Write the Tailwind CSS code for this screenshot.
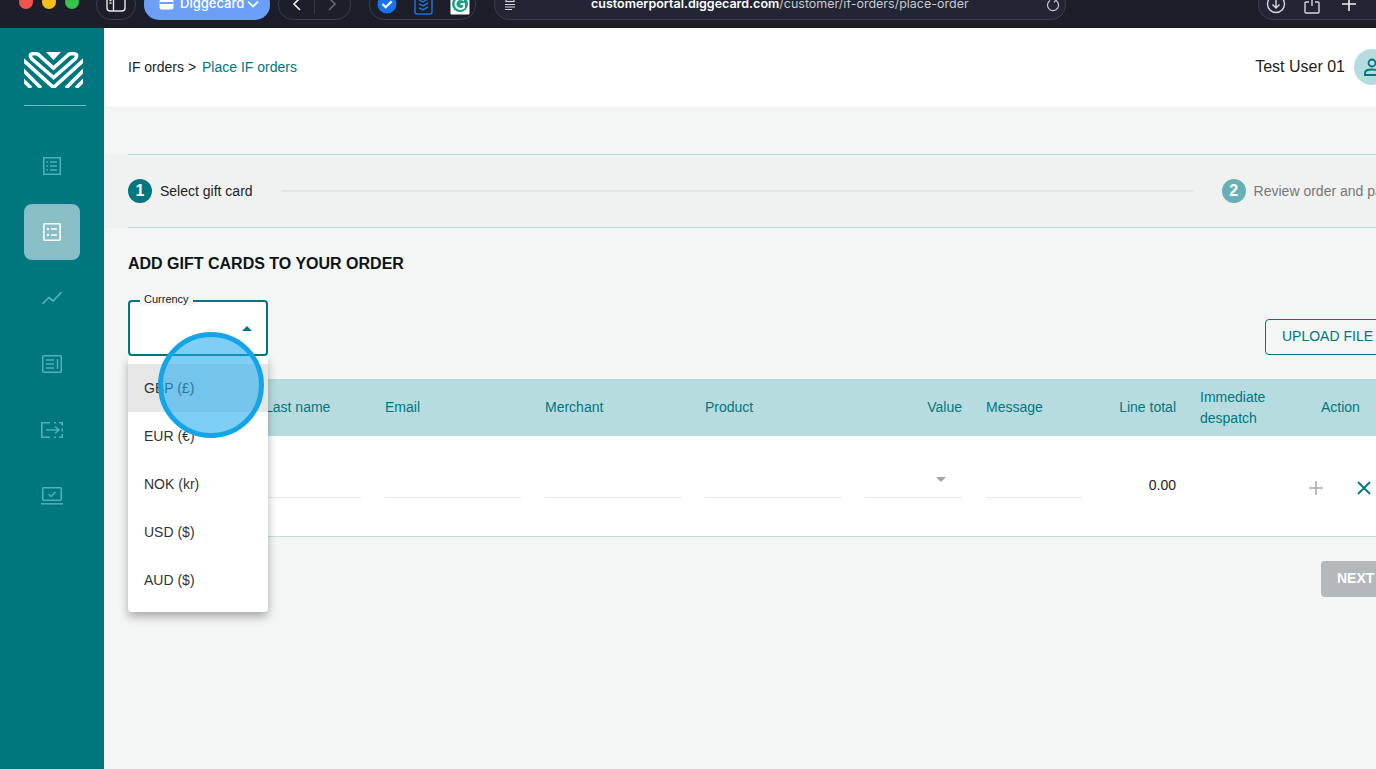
<!DOCTYPE html>
<html lang="en">
<head>
  <meta charset="UTF-8" />
  <title>Place IF orders</title>
  <script src="https://cdn.jsdelivr.net/npm/@tailwindcss/browser@4"></script>
</head>
<body class="w-[1376px] h-[769px] overflow-hidden bg-[#f4f6f6] font-['Liberation_Sans',Arial,sans-serif]">

  <!-- browser toolbar, cut off at the top of the capture -->
  <div class="h-[28px] overflow-hidden bg-[#1c1e29]">
    <div class="flex items-end h-[20px] pl-[19px] w-[1500px] font-['Inter',sans-serif]">
      <div class="flex gap-[9px] self-start -mt-[5px]">
        <span class="w-[14px] h-[14px] rounded-full bg-[#f0544f]"></span>
        <span class="w-[14px] h-[14px] rounded-full bg-[#f8bd1c]"></span>
        <span class="w-[14px] h-[14px] rounded-full bg-[#36c24b]"></span>
      </div>
      <div class="ml-[17px] w-[40px] h-[32px] shrink-0 rounded-[15px] border border-[#3a3d4a] flex items-center justify-center">
        <svg width="20" height="16" viewBox="0 0 20 16" fill="none" stroke="#e8e8ea" stroke-width="1.4"><rect x="1" y="1" width="18" height="14" rx="3"/><path d="M7.500 1v14"/><path d="M3.500 4.500h2M3.500 7h2" /></svg>
      </div>
      <div class="ml-[8px] w-[126px] h-[32px] shrink-0 rounded-[15px] bg-[#6c9ff6] flex items-center pl-[15px] text-white text-[13px] font-medium">
        <svg width="15" height="11" viewBox="0 0 15 11" class="mr-[6px]"><rect x="0.500" y="0.500" width="14" height="10" rx="2" fill="#fff"/><rect x="0.500" y="3" width="14" height="2" fill="#6c9ff6"/></svg>
        <span>Diggecard</span>
        <svg width="12" height="8" viewBox="0 0 12 8" fill="none" stroke="#fff" stroke-width="1.6" class="ml-[3px]"><path d="M1 1.500l5 5 5-5"/></svg>
      </div>
      <div class="ml-[8px] w-[73px] h-[32px] shrink-0 rounded-[15px] border border-[#3a3d4a] flex items-center">
        <div class="w-[36px] flex justify-center"><svg width="10" height="14" viewBox="0 0 10 14" fill="none" stroke="#e8e8ea" stroke-width="1.7"><path d="M8 1L2 7l6 6"/></svg></div>
        <div class="w-px h-[20px] bg-[#3a3d4a]"></div>
        <div class="w-[36px] flex justify-center"><svg width="10" height="14" viewBox="0 0 10 14" fill="none" stroke="#62646e" stroke-width="1.7"><path d="M2 1l6 6-6 6"/></svg></div>
      </div>
      <div class="ml-[18px] w-[107px] h-[32px] shrink-0 rounded-[15px] border border-[#3a3d4a] flex items-center pl-[7px] gap-[17px]">
        <svg width="20" height="20" viewBox="0 0 20 20"><circle cx="10" cy="10" r="9.500" fill="#1a73e8"/><path d="M5.500 10l3.200 3.200 6-6" fill="none" stroke="#fff" stroke-width="2.200"/></svg>
        <svg width="19" height="22" viewBox="0 0 19 22" fill="none" stroke="#1f6fd6" stroke-width="1.500"><rect x="1" y="1" width="17" height="20" rx="2"/><path d="M5 7l4 2 5-3M5 11l4 2 5-3M5 15l4 2 5-3"/></svg>
        <svg width="20" height="22" viewBox="0 0 20 22"><rect x="0.500" y="0.500" width="19" height="21" rx="1" fill="#fff"/><circle cx="10" cy="11" r="8" fill="#15a37f"/><path d="M14 7.500a5 5 0 1 0 0 7V11h-3.500" fill="none" stroke="#fff" stroke-width="2"/></svg>
      </div>
      <div class="ml-[18px] w-[572px] h-[32px] shrink-0 rounded-[15px] border border-[#3a3d4a] bg-[#222634] flex items-center relative">
        <svg width="12" height="14" viewBox="0 0 12 14" fill="none" stroke="#d8d8dc" stroke-width="1.200" class="ml-[9px]"><rect x="2" y="0.500" width="8" height="4"/><path d="M1 7.500h10M1 10h10M1 12.500h7"/></svg>
        <div class="ml-[75px] text-[12.500px] whitespace-nowrap"><span class="font-semibold text-white">customerportal.diggecard.com</span><span class="text-[#c8c9ce]">/customer/if-orders/place-order</span></div>
        <svg width="14" height="14" viewBox="0 0 14 14" fill="none" stroke="#c8c9ce" stroke-width="1.200" class="absolute left-[551px] top-[9px]"><path d="M9.500 2.200A5.500 5.500 0 1 1 4 2.500"/><path d="M7.500 0.500l2.200 1.700-1.700 2.200"/></svg>
      </div>
      <div class="ml-[192px] w-[132px] h-[32px] shrink-0 rounded-[15px] border border-[#3a3d4a] bg-[#222634] flex items-center pl-[7px] gap-[18px]">
        <svg width="20" height="20" viewBox="0 0 20 20" fill="none" stroke="#d8d8dc" stroke-width="1.400"><circle cx="10" cy="10" r="8.500"/><path d="M10 5v9M6.500 10.500L10 14l3.500-3.500"/></svg>
        <svg width="16" height="20" viewBox="0 0 16 20" fill="none" stroke="#d8d8dc" stroke-width="1.400"><path d="M5 8H2a1 1 0 0 0-1 1v9a1 1 0 0 0 1 1h12a1 1 0 0 0 1-1V9a1 1 0 0 0-1-1h-3"/><path d="M8 1v11"/></svg>
        <svg width="16" height="16" viewBox="0 0 16 16" fill="none" stroke="#f0f0f2" stroke-width="1.600" class="ml-[3px]"><path d="M8 1v14M1 8h14"/></svg>
      </div>
    </div>
  </div>

  <div class="flex h-[741px]">
    <!-- sidebar -->
    <aside class="w-[104px] shrink-0 bg-[#00777f] px-[24px] flex flex-col">
      <svg width="59" height="36" viewBox="0 0 59 36" class="mt-[24px]">
        <defs><clipPath id="logoClip"><rect width="59" height="36" rx="3"/></clipPath></defs>
        <g clip-path="url(#logoClip)" fill="none" stroke="#fff" stroke-width="3.600">
          <path d="M22 0h15l-7.500 8z" fill="#fff" stroke="none"/>
          <path d="M29.500 25.500L7.500 6.500Q4.500 2 9 1.800H12.500Q14 1.800 15 3L29.500 16L44 3Q45 1.800 46.500 1.800H50Q54.500 2 51.500 6.500Z"/>
          <path d="M-3 6L29.500 35.500L62 6"/>
          <path d="M-3 16L17 36M62 16L42 36"/>
          <path d="M-3 26L7 36M62 26L52 36"/>
        </g>
      </svg>
      <div class="mt-[17px] w-[62px] h-px bg-[#6fbfc5] shrink-0"></div>
      <nav class="mt-[32px] flex flex-col gap-[10px]">
        <a class="w-[56px] h-[56px] flex items-center justify-center">
          <svg width="18" height="18" viewBox="0 0 18 18" fill="none" stroke="#4fb1b9" stroke-width="1.500"><rect x="0.750" y="0.750" width="16.500" height="16.500"/><path d="M7 5h7M7 9h7M7 13h7M3.500 5h1.500M3.500 9h1.500M3.500 13h1.500"/></svg>
        </a>
        <a class="w-[56px] h-[56px] flex items-center justify-center rounded-lg bg-[#88bfc6]">
          <svg width="18" height="18" viewBox="0 0 18 18" fill="none" stroke="#fff" stroke-width="1.600"><rect x="0.800" y="0.800" width="16.400" height="16.400" rx="1"/><path d="M8 6h6M8 12h6"/><circle cx="5" cy="6" r="1.200" fill="#fff" stroke="none"/><circle cx="5" cy="12" r="1.200" fill="#fff" stroke="none"/></svg>
        </a>
        <a class="w-[56px] h-[56px] flex items-center justify-center">
          <svg width="20" height="14" viewBox="0 0 20 14" fill="none" stroke="#4fb1b9" stroke-width="1.700"><path d="M0.500 13L7 6.500l4 3.500 8.500-9"/></svg>
        </a>
        <a class="w-[56px] h-[56px] flex items-center justify-center">
          <svg width="20" height="18" viewBox="0 0 20 18" fill="none" stroke="#4fb1b9" stroke-width="1.500"><rect x="0.750" y="0.750" width="18.500" height="16.500" rx="1"/><path d="M4 5h8M4 9h8M4 13h8M15.500 4v10"/></svg>
        </a>
        <a class="w-[56px] h-[56px] flex items-center justify-center">
          <svg width="22" height="16" viewBox="0 0 22 16" fill="none" stroke="#4fb1b9" stroke-width="1.600"><path d="M9 0.800H0.800v14.400H9"/><path d="M5 8h13M14 4.500L18 8l-4 3.500"/><path d="M13 0.800h2M18 0.800h3.200v3M21.200 6.500v3M21.200 12v3.200H18M15 15.200h-2"/></svg>
        </a>
        <a class="w-[56px] h-[56px] flex items-center justify-center">
          <svg width="22" height="18" viewBox="0 0 22 18" fill="none" stroke="#4fb1b9" stroke-width="1.500"><rect x="1.750" y="0.750" width="18.500" height="12.500" rx="1"/><path d="M7.500 7l2.500 2.500 4.500-4.500"/><path d="M0 16.800h22"/></svg>
        </a>
      </nav>
    </aside>

    <!-- main column is wider than the captured window -->
    <main class="w-[1340px] shrink-0 text-[14px] text-[#222]">
      <header class="h-[78px] bg-white flex items-center justify-between pl-[24px] pr-[54px]">
        <div>IF orders &gt; <span class="ml-[2px] text-[#00777f]">Place IF orders</span></div>
        <div class="flex items-center gap-[9px]">
          <span class="text-[16px]">Test User 01</span>
          <div class="w-[36px] h-[36px] rounded-full bg-[#b7dcdf] flex items-center justify-center">
            <svg width="20" height="20" viewBox="0 0 20 20" fill="none" stroke="#00777f" stroke-width="1.800"><circle cx="10" cy="6" r="3.500"/><path d="M3 18v-2c0-2.500 2.500-3.500 7-3.500s7 1 7 3.500v2z"/></svg>
          </div>
        </div>
      </header>

      <div class="mt-[48px] bg-[#f0f2f2]">
        <div class="mx-[24px] h-[74px] border-y border-[#b7dcdf] flex items-center">
          <span class="w-[24px] h-[24px] rounded-full bg-[#00777f] text-white text-[16px] font-bold flex items-center justify-center">1</span>
          <span class="ml-[8px]">Select gift card</span>
          <span class="ml-[28px] w-[912px] h-[2px] bg-[#e2e5e5]"></span>
          <span class="ml-[29px] w-[24px] h-[24px] rounded-full bg-[#66b0b6] text-white text-[16px] font-bold flex items-center justify-center">2</span>
          <span class="ml-[8px] text-[#777] whitespace-nowrap">Review order and pay</span>
        </div>
      </div>

      <div class="px-[24px]">
        <h2 class="mt-[26px] text-[16px] leading-[20px] font-bold text-[#0c1416]">ADD GIFT CARDS TO YOUR ORDER</h2>

        <div class="mt-[26px] flex justify-between items-end">
          <div class="relative w-[140px] h-[56px] rounded-[4px] border-2 border-[#00777f] bg-white">
            <span class="absolute left-[10px] -top-[9px] px-[4px] bg-[#f4f6f6] text-[11px] leading-[13px] text-[#222]">Currency</span>
            <span class="absolute left-[112px] top-[24px] w-0 h-0 border-x-[5px] border-x-transparent border-b-[5px] border-b-[#00777f]"></span>
            <ul class="absolute -left-[2px] top-[54px] z-10 w-[140px] py-[8px] bg-white rounded-[4px] shadow-[0_5px_10px_rgba(0,0,0,0.3)] text-[#333]">
              <li class="h-[48px] pl-[16px] flex items-center bg-[#e6e6e6]">GBP (£)</li>
              <li class="h-[48px] pl-[16px] flex items-center">EUR (€)</li>
              <li class="h-[48px] pl-[16px] flex items-center">NOK (kr)</li>
              <li class="h-[48px] pl-[16px] flex items-center">USD ($)</li>
              <li class="h-[48px] pl-[16px] flex items-center">AUD ($)</li>
            </ul>
          </div>
          <button class="mb-px w-[155px] h-[36px] rounded-[4px] border border-[#00777f] text-left pl-[16px] pb-[2px] text-[#00777f]">UPLOAD FILE</button>
        </div>

        <div class="mt-[23px] h-[57px] bg-[#b7dcdf] text-[#00777f] grid grid-cols-[137px_120px_160px_160px_160px_121px_114px_100px_121px_120px] items-center">
          <div class="pl-[16px]">First name</div>
          <div>Last name</div>
          <div>Email</div>
          <div>Merchant</div>
          <div>Product</div>
          <div class="pr-[24px] text-right">Value</div>
          <div>Message</div>
          <div class="pr-[24px] text-right">Line total</div>
          <div class="leading-[21px]">Immediate<br />despatch</div>
          <div>Action</div>
        </div>
        <div class="h-[101px] bg-white border-b border-[#c5dadb] grid grid-cols-[137px_120px_160px_160px_160px_121px_114px_100px_121px_120px]">
          <div class="pl-[16px] pr-[24px]"><div class="mt-[61px] h-px bg-[#e8eaea]"></div></div>
          <div class="pr-[24px]"><div class="mt-[61px] h-px bg-[#e8eaea]"></div></div>
          <div class="pr-[24px]"><div class="mt-[61px] h-px bg-[#e8eaea]"></div></div>
          <div class="pr-[23px]"><div class="mt-[61px] h-px bg-[#e8eaea]"></div></div>
          <div class="pr-[23px]"><div class="mt-[61px] h-px bg-[#e8eaea]"></div></div>
          <div class="pr-[23px] relative">
            <span class="absolute left-[71px] top-[41px] w-0 h-0 border-x-[5px] border-x-transparent border-t-[5px] border-t-[#a3a3a3]"></span>
            <div class="mt-[61px] h-px bg-[#e8eaea]"></div>
          </div>
          <div class="pr-[17px]"><div class="mt-[61px] h-px bg-[#e8eaea]"></div></div>
          <div class="pr-[24px] pt-[39px] text-right">0.00</div>
          <div></div>
          <div class="flex items-start pt-[44px]">
            <svg width="16" height="16" viewBox="0 0 16 16" fill="none" stroke="#a9a9a9" stroke-width="1.500" class="ml-[-13px]"><path d="M8 1v14M1 8h14"/></svg>
            <svg width="16" height="16" viewBox="0 0 16 16" fill="none" stroke="#00777f" stroke-width="1.800" class="ml-[32px]"><path d="M2 2l12 12M14 2L2 14"/></svg>
          </div>
        </div>

        <div class="mt-[24px] flex justify-end">
          <button class="w-[99px] h-[36px] rounded-[4px] bg-[#b3b8ba] text-left pl-[16px] pb-[2px] text-white font-bold">NEXT</button>
        </div>
      </div>
    </main>
  </div>

  <!-- click highlight from the recording, sits over the page -->
  <div class="absolute z-20 left-[158px] top-[332px] w-[106px] h-[106px] rounded-full border-[5px] border-[#14a5e8] bg-[#23aaee]/58"></div>
</body>
</html>
